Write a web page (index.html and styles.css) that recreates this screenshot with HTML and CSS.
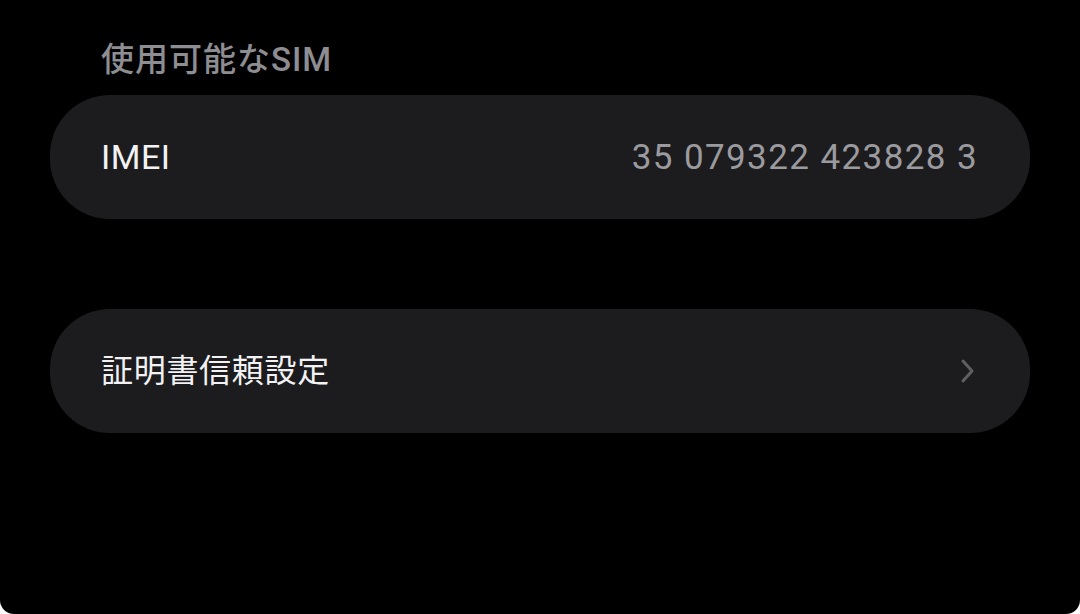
FILE: index.html
```html
<!DOCTYPE html>
<html lang="ja">
<head>
<meta charset="utf-8">
<link rel="stylesheet" href="styles.css">
</head>
<body>
<div class="screen">
  <div class="section-title">使用可能なSIM</div>
  <div class="card">
    <span class="label latin">IMEI</span>
    <span class="value">35 079322 423828 3</span>
  </div>
  <div class="card card-link">
    <span class="label">証明書信頼設定</span>
    <svg class="chevron" width="16" height="26" viewBox="0 0 16 26">
      <path d="M3 3 L12 13 L3 23" fill="none" stroke="#5f5f63" stroke-width="3" stroke-linecap="round" stroke-linejoin="round"/>
    </svg>
  </div>
</div>
</body>
</html>
```

FILE: styles.css
```css
html, body {
  margin: 0;
  padding: 0;
  background: #ffffff;
}
.screen {
  width: 1080px;
  height: 614px;
  background: #000000;
  border-radius: 0 0 14px 14px;
  box-sizing: border-box;
  padding: 40px 50px 0 50px;
  display: flex;
  flex-direction: column;
  font-family: Roboto, "Noto Sans CJK JP", sans-serif;
  overflow: hidden;
}
.section-title {
  color: #8d8d92;
  font-size: 33px;
  line-height: 40px;
  letter-spacing: 1px;
  padding-left: 51px;
  font-weight: 500;
}
.card {
  margin-top: 15px;
  height: 124px;
  background: #1c1c1e;
  border-radius: 60px;
  display: flex;
  align-items: center;
  justify-content: space-between;
  padding: 0 52px 0 51px;
  box-sizing: border-box;
}
.card-link {
  margin-top: 90px;
  padding-right: 54px;
}
.label {
  color: #f2f2f4;
  font-size: 32px;
  line-height: 40px;
  letter-spacing: 0.7px;
}
.label.latin {
  font-size: 34px;
  letter-spacing: 0.5px;
}
.value {
  color: #9a9a9f;
  font-size: 35px;
  letter-spacing: 1.4px;
}
.chevron {
  display: block;
}
```
